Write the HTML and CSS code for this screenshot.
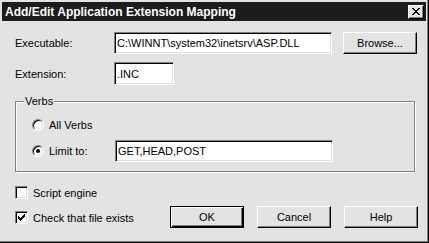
FILE: index.html
```html
<!DOCTYPE html>
<html lang="en">

<head>
    <meta charset="UTF-8">
    <title>Add/Edit Application Extension Mapping</title>
    <link rel="stylesheet" href="styles.css">
</head>

<body>
    <div class="window">
        <!-- title bar -->
        <div class="titlebar">
            <span class="title">Add/Edit Application Extension Mapping</span>
            <span class="close-btn">
                <svg width="8" height="7" viewBox="0 0 8 7">
                    <path d="M0 0h2v1h1v1h2v-1h1v-1h2v1h-1v1h-1v1h-1v1h1v1h1v1h1v1h-2v-1h-1v-1h-2v1h-1v1h-2v-1h1v-1h1v-1h1v-1h-1v-1h-1v-1h-1z" fill="#000" />
                </svg>
            </span>
        </div>

        <div class="content">
            <div class="row row-exe">
                <label class="lbl">Executable:</label>
                <input class="field field-exe" type="text" value="C:\WINNT\system32\inetsrv\ASP.DLL">
                <button class="btn">Browse...</button>
            </div>
            <div class="row row-ext">
                <label class="lbl">Extension:</label>
                <input class="field field-ext" type="text" value=".INC">
            </div>

            <!-- verbs group -->
            <div class="group">
                <span class="legend">Verbs</span>
                <div class="opt opt-all">
                    <span class="radio"></span>
                    <span class="opt-text">All Verbs</span>
                </div>
                <div class="opt opt-limit">
                    <span class="radio checked"></span>
                    <span class="opt-text opt-limit-text">Limit to:</span>
                    <input class="field field-verbs" type="text" value="GET,HEAD,POST">
                </div>
            </div>

            <div class="bottom">
                <div class="checks">
                    <div class="chk-row">
                        <span class="check"></span>
                        <span>Script engine</span>
                    </div>
                    <div class="chk-row">
                        <span class="check">
                            <svg width="7" height="7" viewBox="0 0 7 7">
                                <path d="M0 2h1v1h1v1h1v-1h1v-1h1v-1h1v-1h1v3h-1v1h-1v1h-1v1h-1v1h-1v-1h-1v-1h-1z" fill="#000" />
                            </svg>
                        </span>
                        <span>Check that file exists</span>
                    </div>
                </div>
                <div class="buttons">
                    <button class="btn btn-default">OK</button>
                    <button class="btn">Cancel</button>
                    <button class="btn">Help</button>
                </div>
            </div>
        </div>
    </div>
</body>

</html>
```

FILE: styles.css
```css
body {
    margin: 0;
    padding: 0;
    background-color: #e3e3e3;
    font-family: "Liberation Sans", Arial, sans-serif;
    font-size: 11px;
    color: #000;
}

.window {
    width: 429px;
    height: 243px;
    box-sizing: border-box;
    padding: 2px 0 0 2px;
    border-right: 1px solid #000;
    border-bottom: 1px solid #000;
    box-shadow: inset -1px -1px 0 #808080, inset -2px -2px 0 #e3e3e3;
    background-color: #e3e3e3;
}

.titlebar {
    height: 19px;
    margin-right: 2px;
    background-color: #1c1c1c;
    display: flex;
    align-items: center;
    justify-content: space-between;
    padding: 0 2px 0 3px;
}

.title {
    color: #fff;
    font-weight: bold;
    font-size: 12px;
}

.close-btn {
    width: 16px;
    height: 14px;
    box-sizing: border-box;
    background-color: #e3e3e3;
    border-top: 1px solid #fff;
    border-left: 1px solid #fff;
    border-right: 1px solid #000;
    border-bottom: 1px solid #000;
    box-shadow: inset -1px -1px 0 #808080;
    display: flex;
    align-items: center;
    justify-content: center;
}

.content {
    padding: 11px 0 0 13px;
}

.row {
    display: flex;
    align-items: center;
}

.lbl {
    width: 99px;
}

.row-ext {
    margin-top: 8px;
}

/* sunken text box */
.field {
    box-sizing: border-box;
    height: 22px;
    padding: 0 2px;
    font-family: "Liberation Sans", Arial, sans-serif;
    font-size: 11px;
    background-color: #fff;
    border-top: 1px solid #808080;
    border-left: 1px solid #808080;
    border-right: 1px solid #fff;
    border-bottom: 1px solid #fff;
    box-shadow: inset 1px 1px 0 #000, inset -1px -1px 0 #dfdfdf;
    outline: none;
    margin: 0;
}

.field-exe {
    width: 218px;
}

.field-ext {
    width: 60px;
    height: 23px;
}

.field-verbs {
    width: 218px;
    margin-left: 0;
}

/* raised push button */
.btn {
    box-sizing: border-box;
    width: 74px;
    height: 22px;
    padding: 0;
    margin: 0;
    font-family: "Liberation Sans", Arial, sans-serif;
    font-size: 11px;
    color: #000;
    background-color: #e3e3e3;
    border-top: 1px solid #fff;
    border-left: 1px solid #fff;
    border-right: 1px solid #000;
    border-bottom: 1px solid #000;
    box-shadow: inset -1px -1px 0 #808080;
}

.row-exe .btn {
    margin-left: 11px;
}

.btn-default {
    border: 1px solid #000;
    box-shadow: inset 1px 1px 0 #fff, inset -1px -1px 0 #000, inset -2px -2px 0 #808080;
}

/* etched group box */
.group {
    position: relative;
    width: 400px;
    height: 71px;
    box-sizing: border-box;
    margin-top: 16px;
    border: 1px solid #808080;
    box-shadow: inset 1px 1px 0 #fff, 1px 1px 0 #fff;
    padding: 17px 0 0 16px;
}

.legend {
    position: absolute;
    top: -7px;
    left: 8px;
    padding: 0 1px;
    background-color: #e3e3e3;
}

.opt {
    display: flex;
    align-items: center;
}

.opt-limit {
    margin-top: 9px;
}

.opt-text {
    margin-left: 5px;
}

.opt-limit-text {
    width: 66px;
}

.radio {
    position: relative;
    width: 12px;
    height: 12px;
    box-sizing: border-box;
    border-radius: 50%;
    background-color: #fff;
    border: 1px solid;
    border-color: #808080 #fff #fff #808080;
    box-shadow: inset 1px 1px 0 #000, inset -1px -1px 0 #dfdfdf;
}

.radio.checked::after {
    content: "";
    position: absolute;
    left: 3px;
    top: 3px;
    width: 4px;
    height: 4px;
    border-radius: 50%;
    background-color: #000;
}

.bottom {
    display: flex;
    align-items: flex-end;
    margin-top: 14px;
}

.checks {
    width: 155px;
}

.chk-row {
    display: flex;
    align-items: center;
    height: 13px;
}

.chk-row + .chk-row {
    margin-top: 12px;
}

.check {
    width: 13px;
    height: 13px;
    box-sizing: border-box;
    margin-right: 5px;
    background-color: #fff;
    border-top: 1px solid #808080;
    border-left: 1px solid #808080;
    border-right: 1px solid #fff;
    border-bottom: 1px solid #fff;
    box-shadow: inset 1px 1px 0 #000, inset -1px -1px 0 #dfdfdf;
    display: flex;
    align-items: center;
    justify-content: center;
}

.buttons {
    display: flex;
    gap: 13px;
    margin-bottom: -4px;
}
```
